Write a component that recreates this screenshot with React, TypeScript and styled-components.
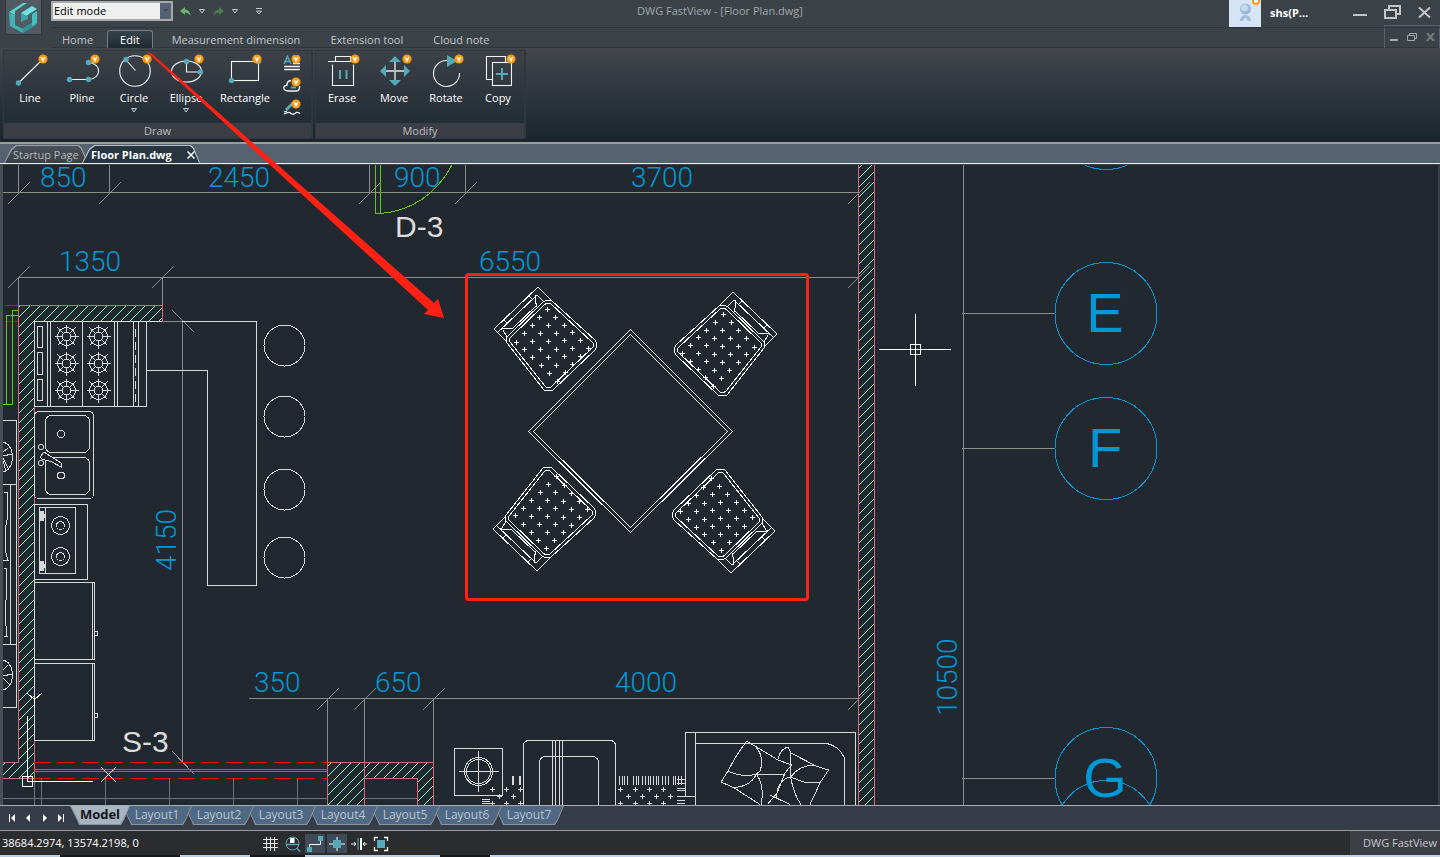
import React from "react";
import styled, { createGlobalStyle } from "styled-components";

const GlobalStyle = createGlobalStyle`
  *, *::before, *::after { box-sizing: border-box; }
  html, body { margin: 0; padding: 0; }
  body { background: #2b2b2b; }
  button { font: inherit; color: inherit; background: none; border: 0; padding: 0; margin: 0; cursor: pointer; }
  svg { display: block; }
`;

const TEAL = "#55a9b9";
const INK = "#d9d9d9";
const DIM = "#8c8c8c";
const BLUE = "#0098d4";
const PINK = "#dc6478";
const LIME = "#66cc00";

const Window = styled.div`
  position: relative;
  display: flex;
  flex-direction: column;
  min-height: 100vh;
  overflow: hidden;
  background: #21282f;
  color: #ffffff;
  font-family: "Open Sans", "Noto Sans", sans-serif;
  font-size: 11px;
  line-height: 16px;
`;

/* ---------- title bar and menu ---------- */

const Header = styled.header`
  display: grid;
  grid-template-columns: 51px 1fr;
  grid-template-rows: 28px 20px;
  background: #3b4248;
`;

const Logo = styled.div`
  grid-row: 1 / 3;
  width: 37px;
  height: 35px;
  margin-left: 5px;
  background: #525a63;
  border: 1px solid #2f363c;
  border-top: 0;
`;

const TitleBar = styled.div`
  position: relative;
  display: flex;
  justify-content: space-between;
  border-bottom: 1px solid #30363c;
`;

const QuickBar = styled.div`
  display: flex;
  align-items: center;
  height: 22px;
`;

const ModePicker = styled.div`
  display: flex;
  width: 122px;
  height: 20px;
  border: 2px solid #a9a9a9;
  background: #efefef;
  margin-right: 4px;
`;

const ModeSelect = styled.select`
  appearance: none;
  flex: 1;
  min-width: 0;
  border: 0;
  border-radius: 0;
  padding: 0 0 0 1px;
  background: #efefef;
  color: #000000;
  font: inherit;
`;

const ModeArrow = styled.span`
  display: flex;
  align-items: center;
  justify-content: center;
  width: 11px;
  background: #566274;
`;

const QuickButton = styled.button<{ $w: number }>`
  display: flex;
  align-items: center;
  justify-content: center;
  width: ${(p) => p.$w}px;
  height: 20px;
`;

const Title = styled.h1`
  position: absolute;
  left: -51px;
  right: 0;
  top: 3px;
  margin: 0;
  text-align: center;
  font-size: 11px;
  line-height: 16px;
  font-weight: 400;
  color: #a4a9ad;
  pointer-events: none;
`;

const WindowTools = styled.div`
  display: flex;
`;

const Account = styled.button`
  display: flex;
  align-items: center;
  gap: 9px;
  height: 27px;
  width: 115px;
  font-weight: 700;
  svg { flex: none; }
  span { padding-bottom: 2px; }
`;

const ControlButton = styled.button`
  display: flex;
  align-items: center;
  justify-content: center;
  width: 32px;
  height: 24px;
`;

const MenuRow = styled.div`
  display: flex;
  justify-content: space-between;
  border-bottom: 1px solid #30363c;
`;

const MenuTabs = styled.nav`
  display: flex;
  padding-left: 1px;
`;

const MenuTab = styled.button<{ $active?: boolean }>`
  height: ${(p) => (p.$active ? 18 : 20)}px;
  margin-top: ${(p) => (p.$active ? 2 : 0)}px;
  padding: ${(p) => (p.$active ? "0 12px" : "3px 10px 0")};
  margin-left: ${(p) => (p.$active ? -6 : 0)}px;
  margin-right: ${(p) => (p.$active ? 9 : 10)}px;
  color: ${(p) => (p.$active ? "#ffffff" : "#c3c7ca")};
  background: ${(p) => (p.$active ? "linear-gradient(#39424a, #1d2a31)" : "none")};
  border: ${(p) => (p.$active ? "1px solid #747d86" : "0")};
  border-bottom: 0;
  border-radius: 3px 3px 0 0;
`;

const ChildControls = styled.div`
  display: flex;
  align-items: center;
  width: 56px;
  height: 24px;
  margin-top: -3px;
  border: 1px solid #566274;
  button { width: 18px; height: 20px; display: flex; align-items: center; justify-content: center; }
`;

/* ---------- ribbon ---------- */

const Ribbon = styled.section`
  display: flex;
  gap: 2px;
  height: 94px;
  padding: 2px 0 2px 3px;
  background: linear-gradient(#43474d, #2e353d 50%, #1a262d);
`;

const Group = styled.fieldset`
  display: flex;
  flex-direction: column;
  margin: 0;
  padding: 0;
  min-width: 0;
  height: 89px;
  border: 1px solid #30383f;
  border-right: 2px solid #30383f;
  background: linear-gradient(#3d4248, #2a323a 60%, #1f2930);
`;

const GroupTools = styled.div`
  display: flex;
  flex: 1;
`;

const GroupName = styled.div`
  height: 15px;
  line-height: 16px;
  text-align: center;
  color: #b9bec2;
  background: #3b3f45;
`;

const Tool = styled.button<{ $wide?: boolean }>`
  display: flex;
  flex-direction: column;
  align-items: center;
  width: ${(p) => (p.$wide ? 66 : 52)}px;
  padding-top: 3px;
  svg { flex: none; }
  span { line-height: 16px; margin-bottom: 2px; }
`;

const SmallTools = styled.div`
  display: flex;
  flex-direction: column;
  gap: 4px;
  width: 33px;
  padding: 4px 3px;
  button { height: 18px; }
`;

/* ---------- document tabs ---------- */

const DocBar = styled.nav`
  display: flex;
  align-items: flex-end;
  height: 22px;
  padding-left: 4px;
  background: #566270;
  border-top: 2px solid #9a9c9e;
  border-bottom: 1px solid #eceff1;
`;

const docShape = "polygon(0 100%, 7px 4px, 12px 0, calc(100% - 9px) 0, calc(100% - 6px) 3px, 100% 100%)";

const DocTab = styled.div<{ $active?: boolean }>`
  display: flex;
  align-items: center;
  height: 18px;
  width: ${(p) => (p.$active ? 118 : 84)}px;
  margin-left: ${(p) => (p.$active ? -6 : 0)}px;
  padding: 1px 0 0 9px;
  justify-content: space-between;
  background: ${(p) => (p.$active ? "#b8bec4" : "#9aa0a6")};
  clip-path: ${docShape};
  position: relative;
  color: ${(p) => (p.$active ? "#ffffff" : "#b6babe")};
  font-weight: ${(p) => (p.$active ? 700 : 400)};
  &::before {
    content: "";
    position: absolute;
    inset: 1px 1px 0 1px;
    clip-path: ${docShape};
    background: ${(p) => (p.$active ? "#273640" : "linear-gradient(#4a5158, #3a4046)")};
  }
  button { position: relative; white-space: nowrap; }
`;

const CloseTab = styled.button`
  width: 13px;
  height: 16px;
  display: flex;
  align-items: center;
`;

/* ---------- drawing area ---------- */

const Viewport = styled.main`
  flex: 1 1 0;
  min-height: 0;
  overflow: hidden;
  border-left: 3px solid #4a4f55;
  border-right: 2px solid #3b4046;
  border-top: 1px solid #3c4248;
  position: relative;
`;

const Drawing = styled.svg`
  width: 100%;
  height: 100%;
  position: absolute;
  inset: 0;
`;

const Annotation = styled.svg`
  position: absolute;
  left: 0;
  top: 0;
  width: 820px;
  height: 610px;
  pointer-events: none;
`;

/* ---------- bottom ---------- */

const LayoutBar = styled.nav`
  display: flex;
  align-items: flex-start;
  height: 26px;
  padding-left: 4px;
  background: #363d49;
  border-top: 1px solid #a5acb5;
  border-bottom: 1px solid #9a9c9e;
`;

const NavButtons = styled.div`
  display: flex;
  width: 66px;
  height: 24px;
  button { width: 16px; height: 24px; display: flex; align-items: center; justify-content: center; margin-right: 1px; }
`;

const sheetShape = "polygon(0 0, 100% 0, calc(100% - 6px) 14px, calc(100% - 9px) 100%, 9px 100%, 7px 14px)";

const SheetTab = styled.button<{ $active?: boolean; $z: number }>`
  position: relative;
  z-index: ${(p) => p.$z};
  width: ${(p) => (p.$active ? 60 : 70)}px;
  height: 19px;
  padding-bottom: 2px;
  margin-right: -8px;
  clip-path: ${sheetShape};
  background: #8d9399;
  color: ${(p) => (p.$active ? "#101418" : "#b9c6d3")};
  font-weight: ${(p) => (p.$active ? 700 : 400)};
  font-size: ${(p) => (p.$active ? 13 : 12)}px;
  line-height: 17px;
  &::before {
    content: "";
    position: absolute;
    inset: 0 1px 1px 1px;
    clip-path: ${sheetShape};
    background: ${(p) => (p.$active ? "#a7b5c1" : "#4f6883")};
  }
  span { position: relative; }
`;

const StatusBar = styled.footer`
  display: flex;
  justify-content: space-between;
  height: 24px;
  background: #2b2c2d;
`;

const Coordinates = styled.output`
  width: 260px;
  padding: 4px 0 0 2px;
`;

const StatusLeft = styled.div`
  display: flex;
`;

const StatusToggle = styled.button<{ $on?: boolean }>`
  width: 20px;
  height: 19px;
  margin: 3px 1px 0;
  display: flex;
  align-items: center;
  justify-content: center;
  background: ${(p) => (p.$on ? "#3f4b58" : "none")};
`;

const Brand = styled.div`
  width: 90px;
  padding: 4px 3px 0 0;
  text-align: right;
  background: #3c4046;
  color: #c3c7ca;
`;

const Taskbar = styled.div`
  height: 2px;
  background: linear-gradient(90deg, #b9cfe0 0 60px, #15171a 60px 180px, #b9cfe0 180px 250px, #15171a 250px 305px, #b9cfe0 305px 440px, #15171a 440px 490px, #c3d3e8 490px);
`;

/* ---------- icons ---------- */

const Badge = ({ x, y }: { x: number; y: number }) => (
  <g>
    <circle cx={x} cy={y} r="4.600" fill="#f99a10" stroke="none" />
    <path d={`M${x - 1.8} ${y - 2}l1.8 3.8l1.8 -3.8`} stroke="#fff" strokeWidth="1.400" fill="none" />
  </g>
);

const Glyph = ({ children }: { children: React.ReactNode }) => (
  <svg width="44" height="36" viewBox="0 0 44 36" fill="none" stroke="#f4f4f4" strokeWidth="1.1" aria-hidden="true">
    {children}
  </svg>
);

const Dot = ({ x, y }: { x: number; y: number }) => <circle cx={x} cy={y} r="2.7" fill={TEAL} stroke="none" />;

const Caret = () => (
  <svg width="6" height="5" viewBox="0 0 6 5" aria-hidden="true">
    <path d="M0.5 0.5H5.5L3 4Z" fill="#3a4046" stroke="#d5d8da" strokeWidth="0.9" />
  </svg>
);

const LineIcon = () => (
  <Glyph>
    <path d="M10.500 29L34 6" />
    <Dot x={10.500} y={29} />
    <Badge x={35} y={5} />
  </Glyph>
);

const PlineIcon = () => (
  <Glyph>
    <path d="M9.500 25.500H28.500C42 25 42 9 28.500 8.500" />
    <Dot x={9.5} y={25.5} />
    <Dot x={28.5} y={25.5} />
    <Dot x={28.5} y={8.5} />
    <Badge x={35} y={5} />
  </Glyph>
);

const CircleIcon = () => (
  <Glyph>
    <circle cx="23" cy="17" r="15.300" />
    <path d="M14 6L23.500 16.500" />
    <Dot x={14} y={5.5} />
    <Badge x={35} y={5} />
  </Glyph>
);

const EllipseIcon = () => (
  <Glyph>
    <ellipse cx="22.500" cy="17.500" rx="15" ry="10.500" />
    <path d="M22.500 7.500V18H36" />
    <Dot x={22.5} y={7.5} />
    <Dot x={36.5} y={18} />
    <Badge x={35} y={5} />
  </Glyph>
);

const RectangleIcon = () => (
  <Glyph>
    <rect x="8.500" y="7.500" width="27" height="19" />
    <Dot x={8.5} y={26.5} />
    <Dot x={35.5} y={7.5} />
    <Badge x={34} y={5} />
  </Glyph>
);

const EraseIcon = () => (
  <Glyph>
    <path d="M8 7.500H33M15.500 7V2.500H30.500V7M12.500 10.500V31.500H33.500V10.500" />
    <path d="M20 16V25M26.500 16V25" stroke={TEAL} strokeWidth="2" />
    <Badge x={35} y={5} />
  </Glyph>
);

const MoveIcon = () => (
  <Glyph>
    <path d="M10 17H36M23 5V29" stroke="#b9bcbf" strokeWidth="1.800" />
    <path d="M8 17L14 11V23ZM38 17L32 11V23ZM23 2L17 8H29ZM23 32L17 26H29Z" fill={TEAL} stroke="none" />
    <Badge x={35} y={5} />
  </Glyph>
);

const RotateIcon = () => (
  <Glyph>
    <path d="M35.500 19A13 13 0 1 1 23 6.500" />
    <path d="M23 1V13L33 7Z" fill={TEAL} stroke="none" />
    <Badge x={35} y={5} />
  </Glyph>
);

const CopyIcon = () => (
  <Glyph>
    <path d="M16.500 25.500H10.500V2.500H29.500V8.500" />
    <rect x="16.500" y="8.500" width="19" height="23" />
    <path d="M26 14V26M20 20H32" stroke={TEAL} strokeWidth="2" />
    <Badge x={35} y={5} />
  </Glyph>
);

const SmallGlyph = ({ children }: { children: React.ReactNode }) => (
  <svg width="26" height="18" viewBox="0 0 26 18" fill="none" stroke="#f4f4f4" strokeWidth="1.300" aria-hidden="true">
    {children}
  </svg>
);

const LogoMark = () => (
  <svg width="35" height="34" viewBox="0 0 35 34" aria-hidden="true">
    <path d="M3 13L9 15V25L17 29V33L4 26Z" fill="#3fb3b4" />
    <path d="M3 12L17 3H21L9 11V15Z" fill="#58d6d3" />
    <path d="M17 33L30 25V20L17 28Z" fill="#2f9698" />
    <path d="M26 14L31 11V23L26 26Z" fill="#46bfc0" />
    <path d="M15 13L26 6L31 9L20 16Z" fill="#6fe3df" />
    <path d="M15 13V22L22 19V15L19 16Z" fill="#37a5a6" />
  </svg>
);

/* ---------- floor plan ---------- */

const HATCH_STEP = 9.6;

const Hatch = ({ id, x, y, w, h }: { id: string; x: number; y: number; w: number; h: number }) => {
  const lines: string[] = [];
  const first = Math.ceil((x + y) / HATCH_STEP);
  const last = Math.floor((x + w + y + h) / HATCH_STEP);
  for (let i = first; i <= last; i++) {
    const c = Math.round(i * HATCH_STEP);
    lines.push(`M${c - y - h} ${y + h}L${c - y} ${y}`);
  }
  return (
    <g>
      <clipPath id={id}>
        <rect x={x} y={y} width={w} height={h} />
      </clipPath>
      <path d={lines.join("")} clipPath={`url(#${id})`} stroke="#7fffb8" />
    </g>
  );
};

const Tick = ({ x, y }: { x: number; y: number }) => <path d={`M${x - 10.5} ${y + 11}l22 -22`} stroke={DIM} />;

const plus = (points: number[][], s = 2.5) =>
  points.map(([x, y]) => `M${x - s} ${y}h${2 * s}M${x} ${y - s}v${2 * s}`).join("");

const Burner = ({ x, y }: { x: number; y: number }) => (
  <g>
    <circle cx={x} cy={y} r="4.500" />
    <circle cx={x} cy={y} r="9" />
    <path
      d={`M${x - 12} ${y}h8M${x + 4} ${y}h8M${x} ${y - 12}v8M${x} ${y + 4}v8M${x - 9} ${y - 9}l6 6M${x + 3} ${y + 3}l6 6M${x + 9} ${y - 9}l-6 6M${x - 3} ${y + 3}l-6 6`}
    />
  </g>
);

const CUSHION = [
  [547, 309], [539, 317], [555, 317], [532, 325], [548, 325], [564, 325], [524, 333], [540, 333], [556, 333],
  [572, 332], [516, 342], [532, 341], [548, 341], [564, 340], [580, 340], [524, 349], [540, 349], [556, 349],
  [572, 348], [588, 348], [532, 357], [548, 357], [564, 356], [580, 356], [541, 365], [556, 365], [572, 364],
  [549, 373], [565, 372], [557, 381],
].map(([x, y]) => [x + 0.5, y + 0.5]);

const Armchair = ({ transform }: { transform?: string }) => (
  <g transform={transform} stroke="#ffffff">
    <path d="M507 337L543 302Q547 299 552 301L595 340Q598 345 595 350L553 390Q549 392 544 390L507 343Q505 340 507 337Z" />
    <path d="M510 338L544 305Q547 302 551 304L592 342Q595 345 592 348L551 387Q548 389 545 386L510 342Q508 340 510 338Z" />
    <path d="M507 342L494 329L538 287L552 301M498 332L537 295M513 328L536 306M504 320L508 324M529 296L533 300M536 295Q535 302 537 307M537 295L544 302M500 330Q505 327 513 329M503 330L507 337" />
    <path d={plus(CUSHION)} />
  </g>
);

const BARS = [619, 622, 624, 627, 633, 636, 638, 642, 645, 648, 650, 653, 656, 658, 662, 665, 668, 673, 675, 678, 681];

const DimText = styled.text`
  font-family: Roboto, "Open Sans", sans-serif;
  font-size: 28px;
  font-weight: 300;
  fill: ${BLUE};
`;

const MarkText = styled.text`
  font-family: "Liberation Sans", Arial, sans-serif;
  font-size: 30px;
  fill: #dcdcdc;
`;

const AxisText = styled.text`
  font-family: "Liberation Sans", Arial, sans-serif;
  font-size: 56px;
  text-anchor: middle;
  fill: ${BLUE};
`;

const FloorPlan = () => (
  <Drawing role="img" aria-label="Floor plan">
    <g transform="translate(-3 -165)" fill="none" stroke={INK} strokeWidth="1" shapeRendering="crispEdges">
      {/* dimension lines */}
      <g stroke={DIM}>
        <path d="M3 192.500H858M18.500 165V194M109.500 165V194M369.500 165V194M465.500 165V194" />
        <path d="M18 277.500H858M18.500 277V305M162.500 277V305" />
        <path d="M249 698.500H858M327.500 698V762M364.500 698V762M433.500 698V762" />
        <path d="M182.500 321V763M172 310L194 332M172 751L194 774" />
        <path d="M963.500 165V900M962 313.500H1054M962 448.500H1054M962 778.500H1054" />
      </g>
      {[18, 109, 369, 465, 858].map((x) => <Tick key={x} x={x + 0.5} y={193} />)}
      {[18, 162, 858].map((x) => <Tick key={x} x={x + 0.5} y={277} />)}
      {[327, 364, 433, 858].map((x) => <Tick key={x} x={x + 0.5} y={699} />)}

      {/* walls */}
      <Hatch id="w1" x={18} y={306} w={144} h={15} />
      <Hatch id="w2" x={19} y={321} w={15} h={457} />
      <Hatch id="w3" x={3} y={763} w={16} h={15} />
      <Hatch id="w4" x={859} y={165} w={15} h={740} />
      <Hatch id="w5" x={328} y={763} w={36} h={140} />
      <Hatch id="w6" x={365} y={763} w={68} h={15} />
      <Hatch id="w7" x={418} y={778} w={15} h={120} />
      <g stroke={PINK}>
        <path d="M18.500 762V305.500H162.500V321M34.500 406V778M3 762.500H18.500M3 778.500H35" />
        <path d="M858.500 165V900M874.500 165V900" />
        <path d="M327.500 900V762.500H433.500V900M364.500 762V900M364 778.500H417.500V900" />
      </g>
      <g stroke="#ff0000">
        <path d="M5 305.500H18M5 321.500H18" />
        <path d="M34 762.500H328M34 778.500H328" strokeDasharray="17 7" />
      </g>
      <path d="M34 769.500H328M34 771.500H328" stroke={BLUE} />
      <path d="M3 798.500H327M364 798.500H417M34.500 778V900M41.500 778V900M105.500 778V900M169.500 778V900M233.500 778V900M297.500 778V900" stroke="#6f7276" />
      <g stroke={LIME}>
        <path d="M18 310.500H12.500V404.500H3M18 315.500H6.500V404" />
        <path d="M375.500 165V213.500M380.500 165V213.500M375 213.500H381Q428 209 452 165" />
      </g>

      {/* stove */}
      <path d="M34.500 406.500V321.500H256.500V585.500H207.500V370.500H147M34 406.500H146.500V321M47.500 321V406M50.500 321V406M82.500 321V406M114.500 321V406M117.500 321V406M133.500 321V406M138.500 321V406" />
      <path d="M162 321.500H182" stroke={DIM} />
      <path d="M135.500 329V402" strokeDasharray="8 5" />
      <path d="M37.500 326.500h5v21h-5zM37.500 352.500h5v22h-5zM37.500 379.500h5v21h-5z" />
      {[336.5, 363.5, 390.5].map((y) => [66.5, 98.5].map((x) => <Burner key={`${x}-${y}`} x={x} y={y} />))}

      {/* stools */}
      {[345.5, 416.5, 489.5, 557.5].map((y) => <circle key={y} cx="284.500" cy={y} r="20.500" />)}

      {/* sink */}
      <rect x="34.500" y="411.500" width="59" height="87" rx="4" />
      <rect x="45.500" y="415.500" width="44" height="37" rx="6" />
      <rect x="45.500" y="457.500" width="44" height="37" rx="6" />
      <circle cx="61" cy="434" r="3.500" />
      <circle cx="61" cy="475.500" r="3.500" />
      <g shapeRendering="geometricPrecision">
        <circle cx="41" cy="447" r="2.700" />
        <circle cx="41" cy="463" r="2.700" />
      </g>
      <path d="M40 457L44 452L61 463L61 467L52 462L42 459Z" fill="#21282f" />

      {/* cooktop */}
      <path d="M34 504.500H87.500V579.500H34M39.500 507.500H75.500V573.500H39.500ZM45.500 507V573M34.500 504V741" />
      {[525.5, 556.5].map((y) => (
        <g key={y}>
          <circle cx="60.500" cy={y} r="9" />
          <circle cx="60.500" cy={y} r="4" />
        </g>
      ))}
      <path d="M40 511h4v10h-4zM40 561h4v10h-4zM43 514h3v4h-3zM43 564h3v4h-3z" fill={INK} stroke="none" />

      {/* cabinets */}
      <path d="M34 582.500H94.500V659.500H34M92.500 582V659M34 663.500H94.500V740.500H34M92.500 663V740M95 631.500h2v4h-2M95 713.500h2v4h-2" />

      {/* neighbouring room */}
      <path d="M3 420.500H16.500V707.500H3M3 484.500H16M10.500 484V644M3 644.500H16" />
      <ellipse cx="2" cy="457" rx="10.500" ry="15" />
      <ellipse cx="2" cy="675" rx="10.500" ry="15" />
      <path d="M3 452L8 448M3 456L12 454M3 458L9 470M3 461L6 471M3 670L8 665M3 676L12 674M3 678L9 684" />
      <path d="M4 492H7V520L5 530L6 553L8 560H3M4 568H6V600L5 616L7 636H4" />

      {/* bedside table, seat and rug */}
      <path d="M454.500 748.500H502.500V795.500H454.500ZM459 771.500H499M478.500 751V792" />
      <circle cx="478.500" cy="771.500" r="14" />
      <circle cx="478.500" cy="771.500" r="12" />
      <path d="M482 799.500h8M482 801.500h8M482 803.500h8M512.500 776v9M513.500 776v9M519.500 776v9M520.500 776v9" />
      <path d={plus([[492.5, 789.5], [506.5, 789.5], [520.5, 789.5], [499.5, 796.5], [513.5, 796.5], [492.5, 803.5], [506.5, 803.5], [520.5, 803.5]])} />
      <rect x="523.500" y="740.500" width="92" height="180" rx="5" />
      <rect x="539.500" y="756.500" width="59" height="160" rx="6" />
      <path d="M552.500 740V900M555.500 740V900M559.500 740V900M562.500 740V900" />
      <path d={BARS.map((x) => `M${x + 0.5} 776v9`).join("")} />
      <path d={plus([[620.5, 789.5], [635.5, 789.5], [649.5, 789.5], [663.5, 789.5], [628.5, 796.5], [642.5, 796.5], [656.5, 796.5], [670.5, 796.5], [620.5, 803.5], [635.5, 803.5], [649.5, 803.5], [663.5, 803.5]])} />
      <path d="M677 779.500h8M677 783.500h8M677 788.500h8M677 790.500h8M677 796.500h8M677 800.500h8M677 803.500h8" />

      {/* bed with pillows */}
      <path d="M685.500 796.500V732.500H855.500V900M695.500 732V900M685 796.500H695M695 743.500H827Q839 746 844.500 758V900" />
      <path d="M746.500 741L735 758L728 771L721 782L733.500 787.500L760 804.500M746.500 741L756.500 747L778 760L791.500 765L785 773L777 793L767.500 804.500" />
      <path d="M756 747Q765 758 760 771L756.500 774Q750 787 733.500 787.500M728 771Q742 778 756.500 774L785 774M756.500 774Q765 787 761 804.500" />
      <path d="M778 759Q780 749 788 747L791 753L816 766L828.500 770L820.500 782L810 804.500M790.500 753V777M816 766Q802 763 790.500 777L805 782.500L820.500 782M790.500 777Q794 795 801 804.500M790.500 777Q777 780 776.500 798M770 795L790 804.500" />

      {/* table and chairs */}
      <path d="M630.500 329.500L732.500 431.500L630.500 532.500L528.500 431.500ZM630.500 334.500L727.500 431.500L630.500 527.500L533.500 431.500Z" stroke="#ffffff" />
      <Armchair />
      <Armchair transform="translate(1271 5) scale(-1 1)" />
      <Armchair transform="translate(-1 858) scale(1 -1)" />
      <Armchair transform="translate(1269 860) scale(-1 -1)" />

      {/* grid axes */}
      <g stroke={BLUE}>
        {[118.5, 313.5, 448.5, 778.5, 831.5].map((y) => <circle key={y} cx="1106" cy={y} r="51" />)}
      </g>

      {/* origin marker and cursor */}
      <g stroke="#ffffff">
        <path d="M27.500 716V781.500H93M22.500 776.500h10v10h-10zM27 693L34.500 699.500L42 693M34.500 699V708M101 767L116 782M116 767L101 782" />
        <path d="M879 349.500H951M915.500 314V386M910.500 344.500h10v10h-10z" />
      </g>
    </g>
    <g transform="translate(-3 -165)">
      <DimText x="40" y="187">850</DimText>
      <DimText x="208" y="187">2450</DimText>
      <DimText x="394" y="187">900</DimText>
      <DimText x="631" y="187">3700</DimText>
      <DimText x="59" y="271">1350</DimText>
      <DimText x="479" y="271">6550</DimText>
      <DimText x="254" y="692">350</DimText>
      <DimText x="375" y="692">650</DimText>
      <DimText x="615" y="692">4000</DimText>
      <DimText transform="translate(176 571) rotate(-90)">4150</DimText>
      <DimText transform="translate(957 716) rotate(-90)">10500</DimText>
      <MarkText x="395" y="237">D-3</MarkText>
      <MarkText x="122" y="752">S-3</MarkText>
      <AxisText x="1105" y="332">E</AxisText>
      <AxisText x="1105" y="467">F</AxisText>
      <AxisText x="1105" y="797">G</AxisText>
    </g>
  </Drawing>
);

const menu = ["Home", "Edit", "Measurement dimension", "Extension tool", "Cloud note"];

const drawTools = [
  { name: "Line", icon: <LineIcon /> },
  { name: "Pline", icon: <PlineIcon /> },
  { name: "Circle", icon: <CircleIcon />, more: true },
  { name: "Ellipse", icon: <EllipseIcon />, more: true },
  { name: "Rectangle", icon: <RectangleIcon />, wide: true },
];

const modifyTools = [
  { name: "Erase", icon: <EraseIcon /> },
  { name: "Move", icon: <MoveIcon /> },
  { name: "Rotate", icon: <RotateIcon /> },
  { name: "Copy", icon: <CopyIcon /> },
];

const sheets = ["Model", "Layout1", "Layout2", "Layout3", "Layout4", "Layout5", "Layout6", "Layout7"];

export default function App() {
  return (
    <Window>
      <GlobalStyle />
      <Header>
        <Logo><LogoMark /></Logo>
        <TitleBar>
          <QuickBar>
            <ModePicker>
              <ModeSelect aria-label="Mode" defaultValue="Edit mode">
                <option>Edit mode</option>
              </ModeSelect>
              <ModeArrow>
                <svg width="5" height="4" viewBox="0 0 5 4"><path d="M0 0H5L2.500 3Z" fill="#3b4656" /></svg>
              </ModeArrow>
            </ModePicker>
            <QuickButton $w={16} aria-label="Undo">
              <svg width="11" height="9" viewBox="0 0 11 9"><path d="M0 4L5 0V2.500Q10 3 10.500 8.500Q8 5.500 5 5.500V8Z" fill="#6cb46c" /></svg>
            </QuickButton>
            <QuickButton $w={17} aria-label="Undo history"><Caret /></QuickButton>
            <QuickButton $w={16} aria-label="Redo">
              <svg width="11" height="9" viewBox="0 0 11 9"><path d="M11 4L6 0V2.500Q1 3 0.500 8.500Q3 5.500 6 5.500V8Z" fill="#4d7a55" /></svg>
            </QuickButton>
            <QuickButton $w={17} aria-label="Redo history"><Caret /></QuickButton>
            <QuickButton $w={32} aria-label="Customize toolbar">
              <svg width="6" height="7" viewBox="0 0 6 7"><path d="M0 0.500H6M0.500 3H5.500L3 6Z" stroke="#c5c9cc" fill="none" /></svg>
            </QuickButton>
          </QuickBar>
          <Title>DWG FastView - [Floor Plan.dwg]</Title>
          <WindowTools>
            <Account>
              <svg width="32" height="27" viewBox="0 0 32 27" aria-hidden="true">
                <rect width="32" height="27" fill="#d6e5f6" />
                <path d="M10.500 21Q12 15 16.500 15Q21 15 22.500 21H19L16.500 17.500L14 21Z" fill="#a3bcdc" />
                <circle cx="16.500" cy="9" r="5.500" fill="#9bb7dc" />
                <circle cx="15.500" cy="8" r="3.500" fill="#c6d8ee" />
                <circle cx="27" cy="1" r="3" fill="#fff" stroke="#f99a10" strokeWidth="2" />
              </svg>
              <span>shs(P...</span>
            </Account>
            <ControlButton aria-label="Minimize">
              <svg width="14" height="16" viewBox="0 0 14 16"><path d="M0 11H14" stroke="#c3c5c6" strokeWidth="2" /></svg>
            </ControlButton>
            <ControlButton aria-label="Restore">
              <svg width="17" height="14" viewBox="0 0 17 14" fill="none" stroke="#c3c5c6" strokeWidth="2"><path d="M5 4V1H16V9H12" /><rect x="1" y="5" width="11" height="8" /></svg>
            </ControlButton>
            <ControlButton aria-label="Close">
              <svg width="13" height="11" viewBox="0 0 13 11"><path d="M1 0.500L12 10.500M12 0.500L1 10.500" stroke="#c3c5c6" strokeWidth="2" /></svg>
            </ControlButton>
          </WindowTools>
        </TitleBar>
        <MenuRow>
          <MenuTabs>
            {menu.map((m) => <MenuTab key={m} $active={m === "Edit"}>{m}</MenuTab>)}
          </MenuTabs>
          <ChildControls>
            <button aria-label="Minimize drawing"><svg width="8" height="8" viewBox="0 0 8 8"><path d="M0 7H8" stroke="#a5a8ab" strokeWidth="2" /></svg></button>
            <button aria-label="Restore drawing"><svg width="10" height="8" viewBox="0 0 10 8" fill="none" stroke="#a5a8ab"><path d="M2.500 2V0.500H9.500V5.500H7.500M0.500 2.500H7.500V7.500H0.500Z" /></svg></button>
            <button aria-label="Close drawing"><svg width="9" height="8" viewBox="0 0 9 8"><path d="M1 0L8 8M8 0L1 8" stroke="#777b7e" strokeWidth="2" /></svg></button>
          </ChildControls>
        </MenuRow>
      </Header>

      <Ribbon>
        <Group aria-label="Draw">
          <GroupTools>
            {drawTools.map((t) => (
              <Tool key={t.name} $wide={t.wide}>
                {t.icon}
                <span>{t.name}</span>
                {t.more && <Caret />}
              </Tool>
            ))}
            <SmallTools>
              <button aria-label="Text">
                <SmallGlyph>
                  <path d="M3 9L6.500 1.500L10 9M4.500 6.500H8.500" stroke={TEAL} strokeWidth="1.600" />
                  <path d="M12 8.500H19M3 11.500H19M3 14.500H19" />
                  <Badge x={15} y={4} />
                </SmallGlyph>
              </button>
              <button aria-label="Revision cloud">
                <SmallGlyph>
                  <path d="M10 3.500Q6 4 6 8Q2 9 3 12Q4 14 8 14H16Q19 13 18.500 9" />
                  <path d="M10 10.500H15" stroke={TEAL} strokeWidth="2" />
                  <Badge x={15} y={5} />
                </SmallGlyph>
              </button>
              <button aria-label="Sketch">
                <SmallGlyph>
                  <path d="M12 4L5 11" stroke={TEAL} strokeWidth="3" />
                  <path d="M3 13L6 12M3 15Q8 12 10 14.500Q13 16.500 15 13.500Q17 13 19 14.500" />
                  <Badge x={15} y={5} />
                </SmallGlyph>
              </button>
            </SmallTools>
          </GroupTools>
          <GroupName>Draw</GroupName>
        </Group>
        <Group aria-label="Modify">
          <GroupTools>
            {modifyTools.map((t) => (
              <Tool key={t.name}>
                {t.icon}
                <span>{t.name}</span>
              </Tool>
            ))}
          </GroupTools>
          <GroupName>Modify</GroupName>
        </Group>
      </Ribbon>

      <DocBar aria-label="Documents">
        <DocTab><button>Startup Page</button></DocTab>
        <DocTab $active>
          <button>Floor Plan.dwg</button>
          <CloseTab aria-label="Close Floor Plan.dwg">
            <svg width="8" height="8" viewBox="0 0 8 8"><path d="M0.500 0.500L7.500 7.500M7.500 0.500L0.500 7.500" stroke="#fff" strokeWidth="1.500" /></svg>
          </CloseTab>
        </DocTab>
      </DocBar>

      <Viewport><FloorPlan /></Viewport>

      <LayoutBar aria-label="Layouts">
        <NavButtons>
          <button aria-label="First"><svg width="6" height="8" viewBox="0 0 6 8" fill="#fff"><path d="M0 0H1V8H0ZM6 0V8L2 4Z" /></svg></button>
          <button aria-label="Previous"><svg width="5" height="8" viewBox="0 0 5 8" fill="#fff"><path d="M4 0V8L0 4Z" /></svg></button>
          <button aria-label="Next"><svg width="5" height="8" viewBox="0 0 5 8" fill="#fff"><path d="M1 0V8L5 4Z" /></svg></button>
          <button aria-label="Last"><svg width="6" height="8" viewBox="0 0 6 8" fill="#fff"><path d="M5 0H6V8H5ZM0 0V8L4 4Z" /></svg></button>
        </NavButtons>
        {sheets.map((s, i) => (
          <SheetTab key={s} $active={i === 0} $z={sheets.length - i}><span>{s}</span></SheetTab>
        ))}
      </LayoutBar>

      <StatusBar>
        <StatusLeft>
          <Coordinates>38684.2974, 13574.2198, 0</Coordinates>
          <StatusToggle aria-label="Grid">
            <svg width="16" height="16" viewBox="0 0 16 16"><path d="M3.500 1V15M7.500 1V15M11.500 1V15M0 3.500H15M0 7.500H15M0 11.500H15" stroke="#e4e4e4" /></svg>
          </StatusToggle>
          <StatusToggle aria-label="Polar tracking">
            <svg width="16" height="16" viewBox="0 0 16 16" fill="none"><circle cx="7.500" cy="7.500" r="6.500" stroke={TEAL} /><path d="M1 8.500H14M11.500 12L15 15.500" stroke={TEAL} strokeWidth="1.500" /><path d="M5 2H9.500V7H5Z" fill="#fff" /></svg>
          </StatusToggle>
          <StatusToggle $on aria-label="Ortho">
            <svg width="16" height="16" viewBox="0 0 16 16" fill="none"><path d="M2.500 12V8.500H13.500V4" stroke="#fff" /><path d="M11 0H16V5H11ZM0 11H5V16H0Z" fill={TEAL} /></svg>
          </StatusToggle>
          <StatusToggle $on aria-label="Object snap">
            <svg width="16" height="16" viewBox="0 0 16 16"><path d="M0 8H16M8 1V15" stroke="#fff" /><path d="M4 4H12V12H4Z" fill={TEAL} /></svg>
          </StatusToggle>
          <StatusToggle aria-label="Line weight">
            <svg width="16" height="14" viewBox="0 0 16 14" fill="none" stroke="#f4f4f4"><path d="M7 1V13" stroke={TEAL} strokeWidth="1" /><path d="M10 1V13" strokeWidth="2" /><path d="M0 7H5M3 5L5 7L3 9M16 7H12M14 5L12 7L14 9" /></svg>
          </StatusToggle>
          <StatusToggle aria-label="Full screen">
            <svg width="16" height="16" viewBox="0 0 16 16" fill="none"><path d="M1.500 5V1.500H5M11 1.500H14.500V5M14.500 11V14.500H11M5 14.500H1.500V11" stroke="#fff" strokeWidth="1.300" /><path d="M4 4H12V12H4Z" fill={TEAL} /></svg>
          </StatusToggle>
        </StatusLeft>
        <Brand>DWG FastView</Brand>
      </StatusBar>
      <Taskbar />

      <Annotation aria-hidden="true">
        <rect x="466.500" y="274.500" width="341" height="325" rx="2" fill="none" stroke="#ff2114" strokeWidth="3" />
        <path d="M147 52L151 53L434 303L438 299L444 318L424 314L428 310Z" fill="#ff2114" />
      </Annotation>
    </Window>
  );
}
